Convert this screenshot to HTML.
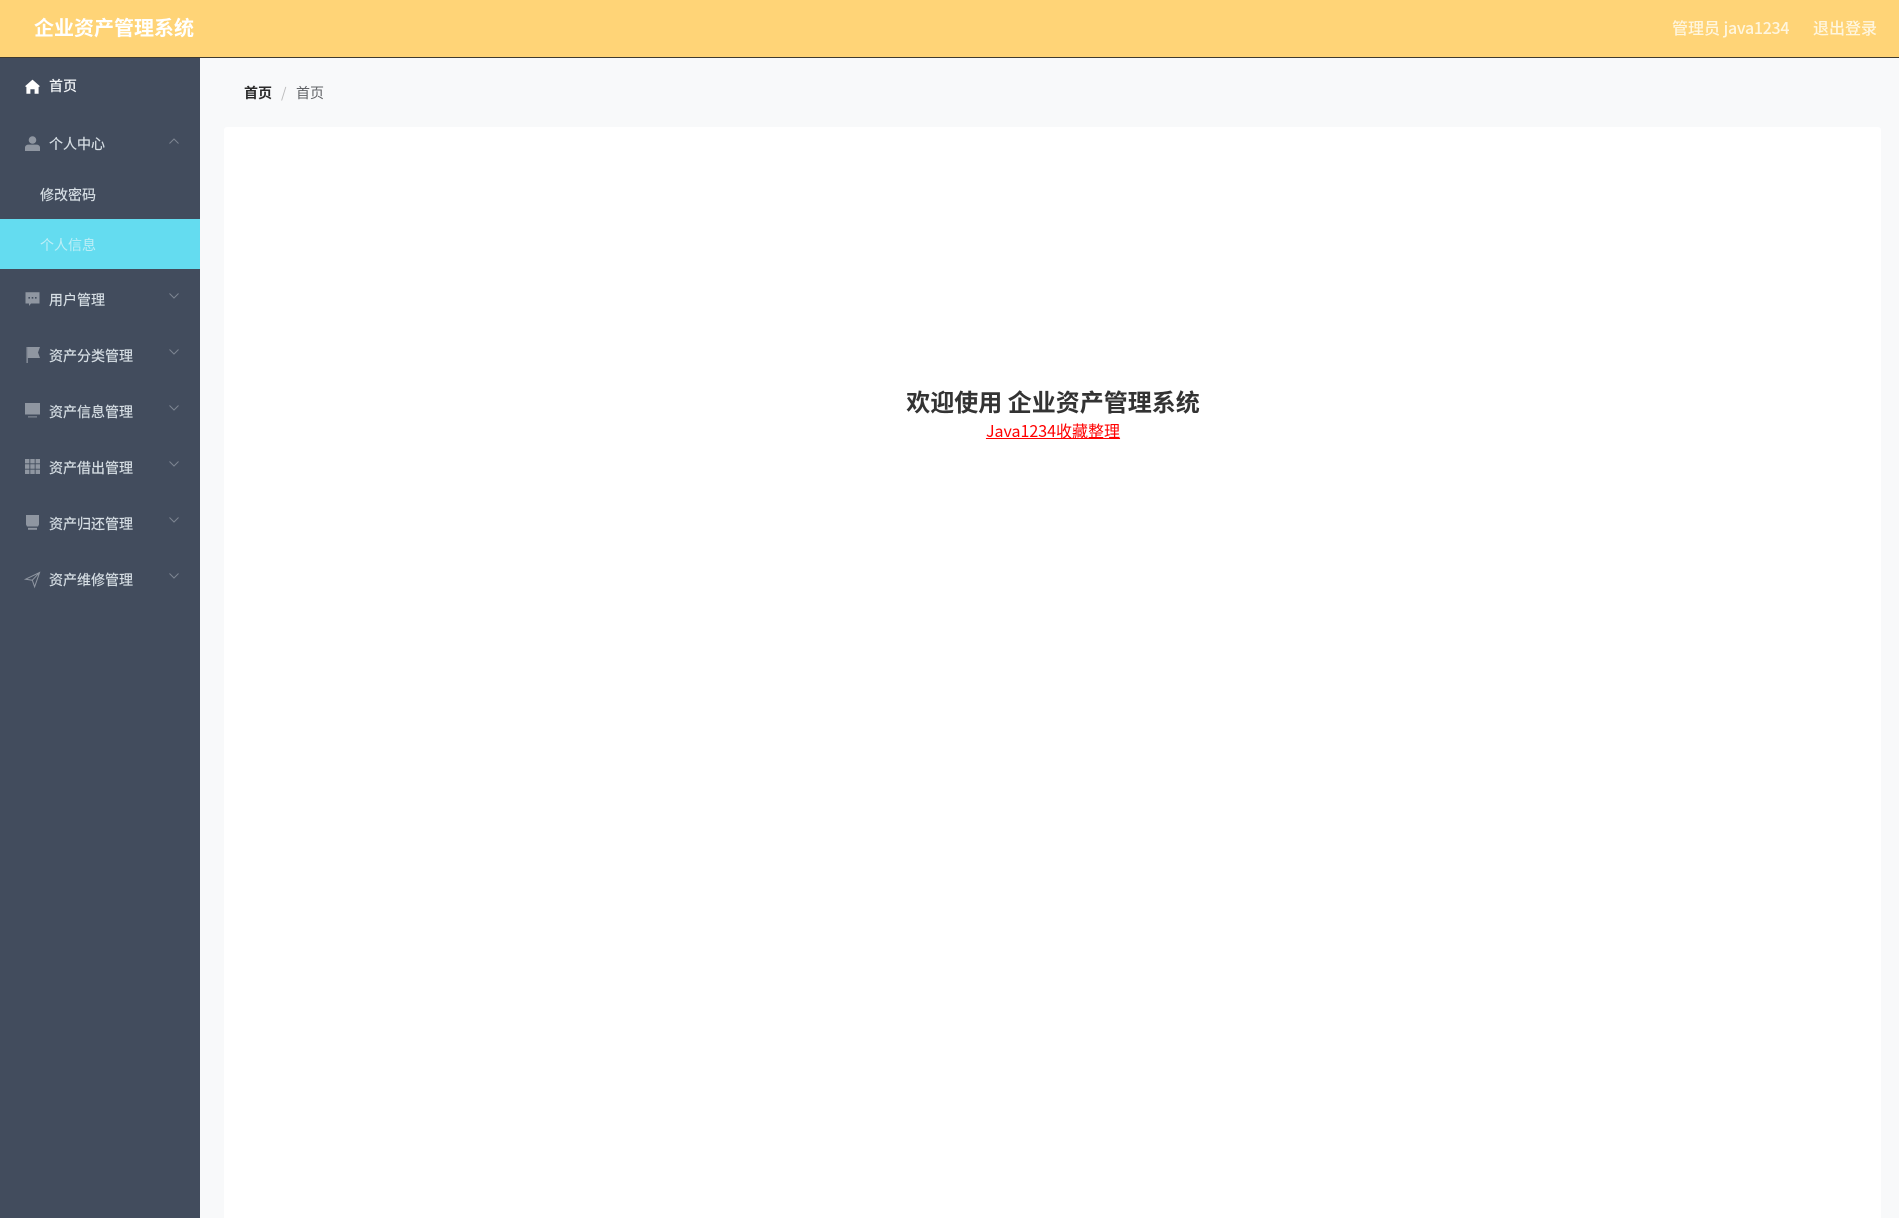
<!DOCTYPE html>
<html lang="zh-CN">
<head>
<meta charset="utf-8">
<title>企业资产管理系统</title>
<style>
html,body{margin:0;padding:0;width:1899px;height:1218px;overflow:hidden;background:#f8f9fa;font-family:"Noto Sans CJK SC","Liberation Sans",sans-serif;}
.a{position:absolute;white-space:nowrap;}
#hd{left:0;top:0;width:1899px;height:57px;background:#ffd477;border-bottom:1px solid #3e3a30;}
#sb{left:0;top:58px;width:200px;height:1160px;background:#424c5d;}
#card{left:224px;top:127px;width:1657px;height:1091px;background:#fff;border-radius:3px 3px 0 0;}
.m{left:49px;font-size:14px;line-height:20px;color:#d8e0e6;font-weight:400;-webkit-text-stroke:.15px #d8e0e6;}
.s{left:40px;font-size:14px;line-height:20px;color:#d8e0e6;-webkit-text-stroke:.15px #d8e0e6;}
.i{position:absolute;left:24.5px;width:15px;height:15px;overflow:visible;}
.c{position:absolute;left:169px;width:10px;height:6px;fill:none;stroke:#7d8592;stroke-width:1;}
</style>
</head>
<body>
<div class="a" id="hd"></div>
<div class="a" style="left:34px;top:13px;font-size:20px;line-height:28px;font-weight:700;color:#fff;">企业资产管理系统</div>
<div class="a" style="left:1672px;top:16px;font-size:16px;line-height:22px;color:#fff6df;font-weight:500;">管理员 <span style="letter-spacing:-.28px;">java1234</span></div>
<div class="a" style="left:1813px;top:16px;font-size:16px;line-height:22px;color:#fff6df;font-weight:500;">退出登录</div>

<div class="a" id="sb"></div>
<div class="a" style="left:0;top:219px;width:200px;height:50px;background:#64dcf0;"></div>

<svg class="i" style="top:79px" viewBox="0 0 15 15"><path fill="#fff" d="M7.5 .6 15 7.2 13.6 8V14.8H9.6V10.2H5.4V14.8H1.4V8L0 7.2Z"/></svg>
<div class="a m" style="top:76px;color:#f0f3f6;font-weight:500;-webkit-text-stroke:0;">首页</div>

<svg class="i" style="top:136px" viewBox="0 0 15 15"><circle cx="7.5" cy="4" r="3.8" fill="#8f96a1"/><path fill="#8f96a1" d="M0 15V11.5C0 9.6 2 8.6 3.6 8.6H11.4C13 8.6 15 9.6 15 11.5V15Z"/></svg>
<div class="a m" style="top:134px;">个人中心</div>
<svg class="c" style="top:138px" viewBox="0 0 10 6"><path d="M.5 5.5 5 1 9.5 5.5"/></svg>

<div class="a s" style="top:185px;">修改密码</div>
<div class="a s" style="top:235px;color:#bdeef6;-webkit-text-stroke:0;">个人信息</div>

<svg class="i" style="top:292px" viewBox="0 0 15 15"><path fill="#8f96a1" d="M.5 .3H14.5V11.5H6L4 14V11.5H.5Z"/><path fill="#424c5d" d="M3.4 5h1.6v1.6H3.4zM6.7 5h1.6v1.6H6.7zM10 5h1.6v1.6H10z"/></svg>
<div class="a m" style="top:290px;">用户管理</div>
<svg class="c" style="top:293px" viewBox="0 0 10 6"><path d="M.5 .5 5 5 9.5 .5"/></svg>

<svg class="i" style="top:347px" viewBox="0 0 15 15"><path fill="#8f96a1" d="M1.5 0H2.8V16H1.5Z"/><path fill="#8f96a1" d="M2.8 0H15L13 5.5 15 11H2.8Z"/></svg>
<div class="a m" style="top:346px;">资产分类管理</div>
<svg class="c" style="top:349px" viewBox="0 0 10 6"><path d="M.5 .5 5 5 9.5 .5"/></svg>

<svg class="i" style="top:403px" viewBox="0 0 15 15"><path fill="#8f96a1" d="M0 0H15V11.5H0Z"/><path fill="#8f96a1" d="M3 13.4H12V14.4H3Z"/></svg>
<div class="a m" style="top:402px;">资产信息管理</div>
<svg class="c" style="top:405px" viewBox="0 0 10 6"><path d="M.5 .5 5 5 9.5 .5"/></svg>

<svg class="i" style="top:459px" viewBox="0 0 15 15"><path fill="#8f96a1" d="M0 0H4.4V4.4H0zM5.3 0H9.7V4.4H5.3zM10.6 0H15V4.4H10.6zM0 5.3H4.4V9.7H0zM5.3 5.3H9.7V9.7H5.3zM10.6 5.3H15V9.7H10.6zM0 10.6H4.4V15H0zM5.3 10.6H9.7V15H5.3zM10.6 10.6H15V15H10.6z"/></svg>
<div class="a m" style="top:458px;">资产借出管理</div>
<svg class="c" style="top:461px" viewBox="0 0 10 6"><path d="M.5 .5 5 5 9.5 .5"/></svg>

<svg class="i" style="top:515px" viewBox="0 0 15 15"><path fill="#8f96a1" d="M1 0H14V9.5L13 11.5H2L1 9.5Z"/><path fill="#8f96a1" d="M3 12.8H12V14.8H3Z"/></svg>
<div class="a m" style="top:514px;">资产归还管理</div>
<svg class="c" style="top:517px" viewBox="0 0 10 6"><path d="M.5 .5 5 5 9.5 .5"/></svg>

<svg class="i" style="top:572px" viewBox="0 0 15 15"><path fill="none" stroke="#8f96a1" stroke-width="1" d="M.6 7.2 14.6 .5 9.6 14.8 7.3 8.2Z M7.3 8.2 14.6 .5"/></svg>
<div class="a m" style="top:570px;">资产维修管理</div>
<svg class="c" style="top:573px" viewBox="0 0 10 6"><path d="M.5 .5 5 5 9.5 .5"/></svg>

<div class="a" style="left:244px;top:83px;font-size:14px;line-height:20px;font-weight:700;color:#2b2b2b;">首页</div>
<div class="a" style="left:281px;top:83px;font-size:14px;line-height:20px;color:#bbb;">/</div>
<div class="a" style="left:296px;top:83px;font-size:14px;line-height:20px;color:#606266;">首页</div>

<div class="a" id="card"></div>
<div class="a" style="left:224.5px;width:1657px;top:384px;text-align:center;font-size:24px;line-height:34px;font-weight:700;color:#333;">欢迎使用 企业资产管理系统</div>
<div class="a" style="left:224.5px;width:1657px;top:418px;text-align:center;font-size:16px;line-height:24px;color:#f00;"><span style="text-decoration:underline;">Java1234收藏整理</span></div>
</body>
</html>
